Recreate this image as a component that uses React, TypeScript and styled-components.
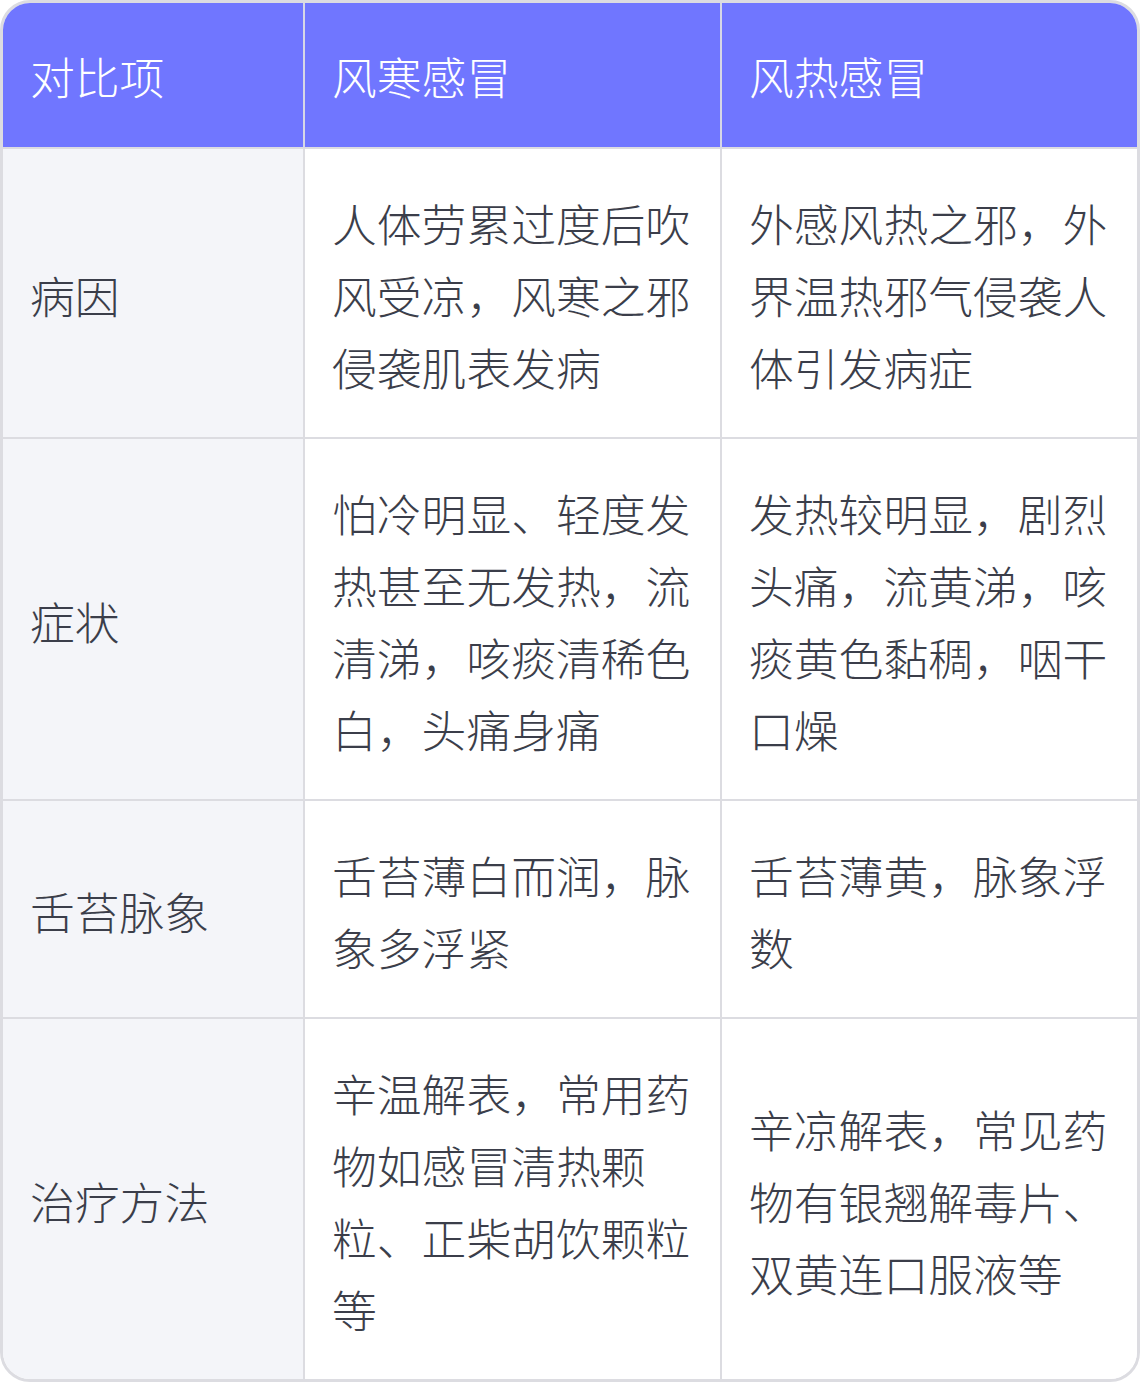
import styled, { createGlobalStyle } from "styled-components"

const GlobalStyle = createGlobalStyle`
  html, body {
    margin: 0;
    padding: 0;
    background: #ffffff;
  }
  body {
    font-family: "Noto Sans CJK SC", "Noto Sans", sans-serif;
  }
`

const rows = [
  {
    item: "病因",
    cold: "人体劳累过度后吹风受凉，风寒之邪侵袭肌表发病",
    hot: "外感风热之邪，外界温热邪气侵袭人体引发病症",
  },
  {
    item: "症状",
    cold: "怕冷明显、轻度发热甚至无发热，流清涕，咳痰清稀色白，头痛身痛",
    hot: "发热较明显，剧烈头痛，流黄涕，咳痰黄色黏稠，咽干口燥",
  },
  {
    item: "舌苔脉象",
    cold: "舌苔薄白而润，脉象多浮紧",
    hot: "舌苔薄黄，脉象浮数",
  },
  {
    item: "治疗方法",
    cold: "辛温解表，常用药物如感冒清热颗粒、正柴胡饮颗粒等",
    hot: "辛凉解表，常见药物有银翘解毒片、双黄连口服液等",
  },
]

const App = () => {
  return (
    <>
      <GlobalStyle />
      <Table>
        <HeadCell>对比项</HeadCell>
        <HeadCell>风寒感冒</HeadCell>
        <HeadCell $last>风热感冒</HeadCell>
        {rows.map((r, i) => {
          const bottom = i === rows.length - 1
          return (
            <Row key={r.item}>
              <Cell $label $bottom={bottom}>{r.item}</Cell>
              <Cell $bottom={bottom}>{r.cold}</Cell>
              <Cell $last $bottom={bottom}>{r.hot}</Cell>
            </Row>
          )
        })}
      </Table>
    </>
  )
}
export default App

const Table = styled.div`
  width: 1140px;
  box-sizing: border-box;
  border: 3px solid #dcdce1;
  border-radius: 30px;
  overflow: hidden;
  display: grid;
  grid-template-columns: 302px 417px 415px;
`
const Row = styled.div`
  display: contents;
`
const HeadCell = styled.div<{ $last?: boolean }>`
  box-sizing: border-box;
  display: flex;
  align-items: center;
  padding: 37px 27px 35px;
  background-color: #7076ff;
  color: #ffffff;
  font-size: 44.8px;
  font-weight: 300;
  line-height: 72px;
  border-right: ${({ $last }) => ($last ? "none" : "2px solid #d6d7e6")};
  border-bottom: 2px solid #dcdce1;
`
const Cell = styled.div<{ $label?: boolean; $last?: boolean; $bottom?: boolean }>`
  box-sizing: border-box;
  display: flex;
  align-items: center;
  padding: 38px 27px 34px;
  background-color: ${({ $label }) => ($label ? "#f4f5f9" : "#ffffff")};
  color: #3b3e4a;
  font-size: 44.8px;
  font-weight: 300;
  line-height: 72px;
  border-right: ${({ $last }) => ($last ? "none" : "2px solid #dcdce1")};
  border-bottom: ${({ $bottom }) => ($bottom ? "none" : "2px solid #dcdce1")};
`
